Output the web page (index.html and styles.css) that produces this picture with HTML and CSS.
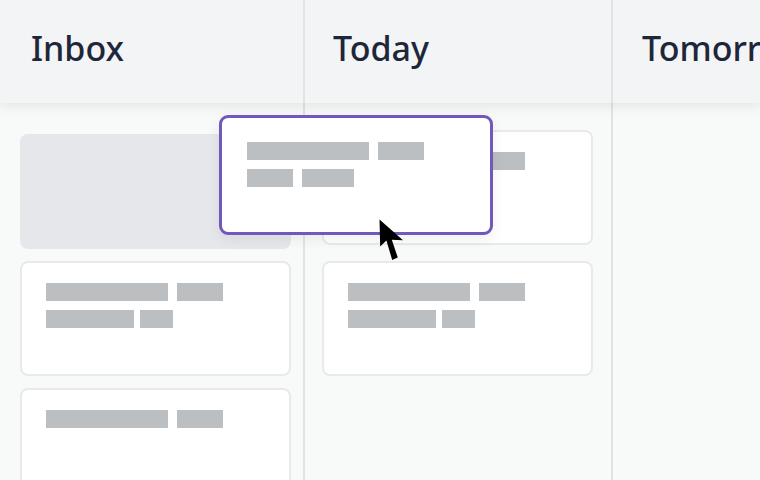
FILE: index.html
```html
<!DOCTYPE html>
<html lang="en">
<head>
<meta charset="utf-8">
<title>Board</title>
<link rel="stylesheet" href="styles.css">
</head>
<body>
<div class="board">
  <header class="heads">
    <div class="head head-inbox">Inbox</div>
    <div class="head">Today</div>
    <div class="head">Tomorrow</div>
  </header>
  <main class="cols">
    <section class="col col-inbox">
      <div class="placeholder"></div>
      <div class="card">
        <div class="line"><span class="bar w122"></span><span class="bar w46"></span></div>
        <div class="line tight"><span class="bar w88"></span><span class="bar w33"></span></div>
      </div>
      <div class="card">
        <div class="line"><span class="bar w122"></span><span class="bar w46"></span></div>
      </div>
    </section>
    <section class="col col-today">
      <div class="card">
        <div class="line"><span class="bar w122"></span><span class="bar w46"></span></div>
      </div>
      <div class="card">
        <div class="line"><span class="bar w122"></span><span class="bar w46"></span></div>
        <div class="line tight"><span class="bar w88"></span><span class="bar w33"></span></div>
      </div>
    </section>
    <section class="col col-tomorrow"></section>
  </main>
  <div class="drag-card">
    <div class="line"><span class="bar w122"></span><span class="bar w46"></span></div>
    <div class="line"><span class="bar w46"></span><span class="bar w52"></span></div>
  </div>
  <svg class="cursor" width="26" height="44" viewBox="0 0 26 44" aria-hidden="true">
    <path d="M0.5 0.5 L1.2 27.5 L7.4 21.4 L13.2 41 L18.8 38.6 L12.8 20.8 L24 21.2 Z" fill="#000"/>
  </svg>
</div>
</body>
</html>
```
FILE: styles.css
```css
* { box-sizing: border-box; }
html, body { margin: 0; padding: 0; }
body {
  width: 760px;
  height: 480px;
  overflow: hidden;
  background: #f8f9f9;
  font-family: "Noto Sans", "Open Sans", sans-serif;
}
.board {
  position: relative;
  width: 760px;
  height: 480px;
  display: flex;
  flex-direction: column;
}
.heads, .cols {
  display: grid;
  grid-template-columns: 305px 308px 1fr;
}
.heads {
  position: relative;
  z-index: 1;
  flex: none;
  height: 103px;
  background: #f3f4f6;
  box-shadow: 0 3px 12px rgba(0, 0, 0, 0.09);
}
.head {
  border-right: 2px solid #e2e3e5;
  padding: 30px 0 0 28px;
  font-size: 34px;
  font-weight: 500;
  line-height: 36px;
  color: #1e2639;
  white-space: nowrap;
  overflow: hidden;
}
.head:last-child { border-right: none; padding-left: 29px; }
.head-inbox { padding-left: 31px; }
.cols {
  flex: 1;
  min-height: 0;
}
.col {
  border-right: 2px solid #e2e3e5;
  display: flex;
  flex-direction: column;
}
.col:last-child { border-right: none; }
.col-inbox { padding: 31px 12px 0 20px; gap: 12px; }
.col-today { padding: 27px 18px 0 17px; gap: 16px; }
.placeholder {
  height: 115px;
  flex: none;
  border-radius: 8px;
  background: #e6e7ea;
}
.card {
  height: 115px;
  flex: none;
  background: #fff;
  border: 2px solid #e8e9eb;
  border-radius: 8px;
  padding: 20px 24px;
}
.line {
  display: flex;
  gap: 9px;
  height: 18px;
}
.line + .line { margin-top: 9px; }
.line.tight { gap: 6px; }
.bar {
  display: block;
  height: 18px;
  background: #bcbfc2;
}
.w122 { width: 122px; }
.w46 { width: 46px; }
.w88 { width: 88px; }
.w33 { width: 33px; }
.w52 { width: 52px; }
.drag-card {
  position: absolute;
  left: 219px;
  top: 115px;
  width: 274px;
  height: 120px;
  background: #fff;
  border: 3px solid #7258bb;
  border-radius: 9px;
  padding: 24px 25px;
  box-shadow: 0 4px 14px rgba(0, 0, 0, 0.07);
  z-index: 2;
}
.cursor {
  position: absolute;
  left: 379px;
  top: 219px;
  z-index: 3;
}
```
